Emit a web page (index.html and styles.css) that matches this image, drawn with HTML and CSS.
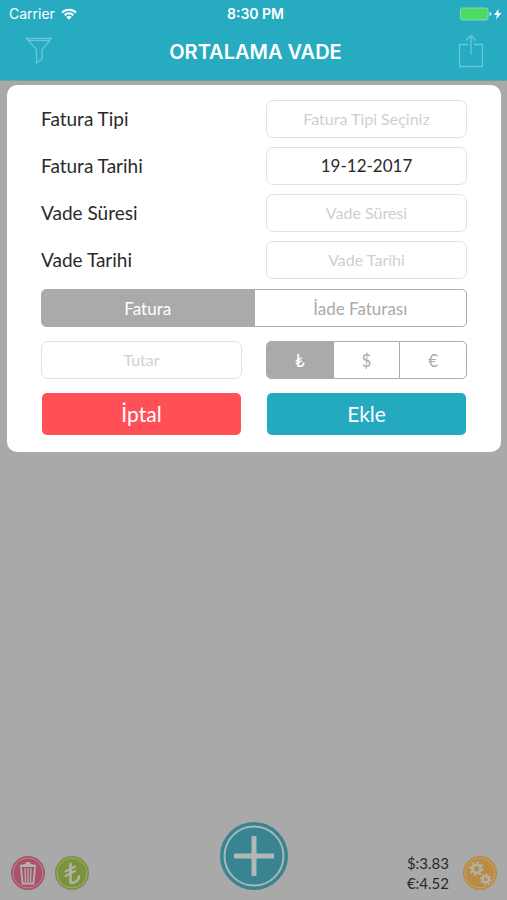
FILE: index.html
```html
<!DOCTYPE html>
<html lang="tr">
<head>
<meta charset="utf-8">
<meta name="viewport" content="width=device-width, initial-scale=1">
<title>Ortalama Vade</title>
<link rel="stylesheet" href="styles.css">
</head>
<body>
<header class="header">
  <div class="status">
    <div class="carrier">Carrier
      <svg width="16" height="12" viewBox="0 0 16 12" fill="none" stroke="#fff" stroke-width="2"><path d="M1 4.600a10 10 0 0 1 14 0M3.600 7.200a6.200 6.200 0 0 1 8.800 0"/><path d="M5.400 9a3.700 3.700 0 0 1 5.200 0L8 11.700z" fill="#fff" stroke="none"/></svg>
    </div>
    <div class="time">8:30 PM</div>
    <div class="battery">
      <svg width="42" height="14" viewBox="0 0 42 14"><rect x=".5" y="1" width="27.500" height="12" rx="2" fill="#4cd964" stroke="#7fd8b4"/><path d="M29.500 5q2 0 2 2t-2 2z" fill="#c5eef2"/><path d="M38.500 2 34 8h3l-1 4.500L41.500 6H38.300z" fill="#fff"/></svg>
    </div>
  </div>
  <div class="navbar">
    <button class="nav-button" type="button" aria-label="Filtrele"><svg width="28" height="28" viewBox="0 0 28 28" fill="none" stroke="#68c6d6" stroke-width="1.300"><path d="M1.500 1.500h25l-9.500 11v9.500l-5.500 4V12.500z"/><path d="M4 3.500h20"/></svg></button>
    <h1 class="title">ORTALAMA VADE</h1>
    <button class="nav-button" type="button" aria-label="Paylaş"><svg width="26" height="34" viewBox="0 0 26 34" fill="none" stroke="#68c6d6" stroke-width="1.300"><path d="M10 10.500H1.500v22h23v-22H16M13 21V1.500M8 6.500l5-5 5 5"/></svg></button>
  </div>
</header>
<main class="main">
  <form class="card">
    <label class="label" for="type">Fatura Tipi</label>
    <input class="field" id="type" type="text" placeholder="Fatura Tipi Seçiniz">
    <label class="label" for="date">Fatura Tarihi</label>
    <input class="field" id="date" type="text" value="19-12-2017">
    <label class="label" for="term">Vade Süresi</label>
    <input class="field" id="term" type="text" placeholder="Vade Süresi">
    <label class="label" for="due">Vade Tarihi</label>
    <input class="field" id="due" type="text" placeholder="Vade Tarihi">
    <div class="segments segments-wide" role="radiogroup" aria-label="Fatura">
      <label class="segment"><input type="radio" name="kind" checked>Fatura</label>
      <label class="segment"><input type="radio" name="kind">İade Faturası</label>
    </div>
    <input class="field" type="text" placeholder="Tutar" aria-label="Tutar">
    <div class="segments" role="radiogroup" aria-label="Para birimi">
      <label class="segment"><input type="radio" name="currency" checked>₺</label>
      <label class="segment"><input type="radio" name="currency">$</label>
      <label class="segment"><input type="radio" name="currency">€</label>
    </div>
    <button class="action cancel" type="button">İptal</button>
    <button class="action add" type="button">Ekle</button>
  </form>
</main>
<footer class="footer">
  <div class="tools">
    <button class="round" type="button" aria-label="Sil"><svg width="34" height="34" viewBox="0 0 34 34" fill="none" stroke="#b5afb0"><circle cx="17" cy="17" r="17" fill="#a95369" stroke="none"/><circle cx="17" cy="17" r="15" stroke="#bd8796"/><path d="M10 11.500 11.500 27.500h11L24 11.500" stroke-width="1.800"/><path d="M14 12l.5 14M17 12v14M20 12l-.5 14" stroke-width="1.300"/><path d="M9 11V9l5-1 1.500-2h3L20 8l5 1v2z" fill="#b5afb0" stroke="none"/></svg></button>
    <button class="round" type="button" aria-label="Türk lirası"><svg width="34" height="34" viewBox="0 0 34 34" fill="none" stroke="#b0b3a7"><circle cx="17" cy="17" r="17" fill="#7c923f" stroke="none"/><circle cx="17" cy="17" r="15" stroke="#a0ad79"/><path d="M15.500 8v17.500q0 2 2.500 1.300Q24 25 24 20.500" stroke-width="2.600" stroke-linecap="round"/><path d="m10.500 15.500 9.500-5M10.500 20l9.500-5" stroke-width="2" stroke-linecap="round"/></svg></button>
  </div>
  <button class="round" type="button" aria-label="Yeni fatura"><svg width="68" height="68" viewBox="0 0 68 68"><circle cx="34" cy="34" r="34" fill="#388491"/><circle cx="34" cy="34" r="29.500" fill="none" stroke="#a9b6b8" stroke-width="2"/><path d="M34 14v40M14 34h40" stroke="#b3b7b8" stroke-width="5"/></svg></button>
  <div class="tools tools-end">
    <div class="rates"><div>$:3.83</div><div>€:4.52</div></div>
    <button class="round" type="button" aria-label="Ayarlar"><svg width="34" height="34" viewBox="0 0 34 34" fill="none" stroke="#b5b1a8"><circle cx="17" cy="17" r="17" fill="#ba8b42" stroke="none"/><circle cx="17" cy="17" r="15" stroke="#c3a373"/><circle cx="13.500" cy="12.700" r="4" stroke-width="2.600"/><circle cx="13.500" cy="12.700" r="6" stroke-width="2.400" pathLength="16" stroke-dasharray="1 1"/><circle cx="22.700" cy="23.300" r="3" stroke-width="2.200"/><circle cx="22.700" cy="23.300" r="4.800" stroke-width="2" pathLength="16" stroke-dasharray="1 1"/></svg></button>
  </div>
</footer>
</body>
</html>
```
FILE: styles.css
```css
* {
  box-sizing: border-box;
}

body {
  display: flex;
  flex-direction: column;
  min-height: 100vh;
  margin: 0;
  background: #a9a9a9;
  color: #2a2a2a;
  font-family: Lato, sans-serif;
}

button {
  border: 0;
  font: inherit;
  cursor: pointer;
}

svg {
  display: block;
}

.header {
  padding-bottom: 5px;
  border-bottom: 1px solid #6f9fa7;
  background: #27abc1;
  color: #fff;
}

.status {
  display: grid;
  grid-template-columns: 1fr auto 1fr;
  align-items: center;
  height: 27px;
  padding: 0 5px 0 9px;
  font-family: Inter, sans-serif;
  font-size: 14px;
}

.carrier {
  display: flex;
  align-items: center;
  gap: 6px;
}

.time {
  font-weight: 600;
}

.battery {
  justify-self: end;
}

.navbar {
  display: flex;
  align-items: center;
  justify-content: space-between;
  height: 48px;
  padding: 0 23px 0 25px;
}

.nav-button {
  padding: 0;
  background: none;
}

.title {
  margin: 0;
  padding-top: 2px;
  font-family: Inter, sans-serif;
  font-size: 20px;
  font-weight: 600;
}

.main {
  flex: 1;
  padding: 4px 6px 0 7px;
}

.card {
  display: grid;
  grid-template-columns: 1fr 1fr;
  gap: 9px 24px;
  align-items: center;
  padding: 15px 34px 17px;
  border-radius: 10px;
  background: #fff;
}

.label {
  padding-bottom: 2px;
  font-size: 19px;
}

.field {
  width: 100%;
  height: 38px;
  padding: 0 8px 2px;
  border: 1px solid #e2e2e2;
  border-radius: 7px;
  background: #fff;
  color: #2a2a2a;
  font: 17px Lato, sans-serif;
  text-align: center;
}

.field::placeholder {
  color: #cfcfcf;
  font-size: 16px;
  opacity: 1;
}

.segments {
  display: flex;
  height: 38px;
  overflow: hidden;
  border: 1px solid #aaa;
  border-radius: 5px;
  color: #aaa;
  font-size: 17px;
}

.segments-wide {
  grid-column: 1 / -1;
  margin: 1px 0 5px;
}

.segment {
  display: flex;
  flex: 1;
  align-items: center;
  justify-content: center;
  cursor: pointer;
}

.segment + .segment {
  border-left: 1px solid #aaa;
}

.segment:has(:checked) {
  background: #aaa;
  color: #fff;
}

.segment input {
  position: absolute;
  opacity: 0;
}

.action {
  height: 42px;
  margin: 5px 1px 0;
  padding: 0 8px 2px;
  border-radius: 5px;
  color: #fff;
  font-size: 21px;
}

.cancel {
  background: #ff5057;
}

.add {
  background: #24aabf;
}

.footer {
  display: grid;
  grid-template-columns: 1fr auto 1fr;
  align-items: end;
  padding: 0 10px 10px 11px;
}

.tools {
  display: flex;
  align-items: center;
  gap: 10px;
}

.tools-end {
  justify-content: flex-end;
  gap: 14px;
}

.round {
  padding: 0;
  border-radius: 50%;
  background: none;
}

.rates {
  height: 40px;
  margin: -3px 0;
  font-size: 15px;
  line-height: 20px;
}
```
